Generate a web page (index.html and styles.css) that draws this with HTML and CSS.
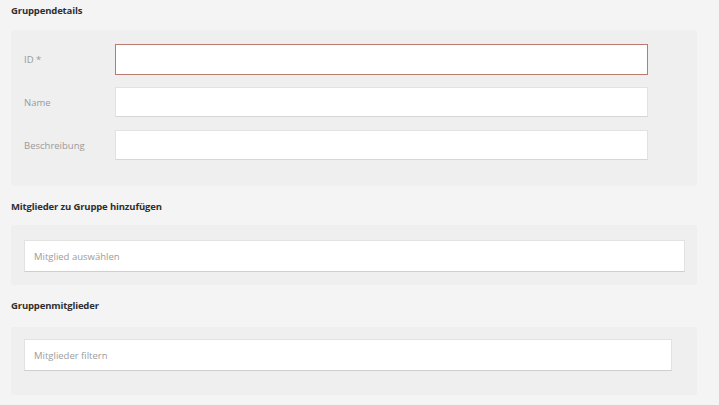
FILE: index.html
```html
<!DOCTYPE html>
<html lang="de">
<head>
<meta charset="utf-8">
<link rel="stylesheet" href="styles.css">
</head>
<body>
<div class="page">
  <h2 class="heading h-first">Gruppendetails</h2>
  <section class="panel panel-details">
    <div class="row">
      <label class="label">ID *</label>
      <div class="field field-error"></div>
    </div>
    <div class="row">
      <label class="label">Name</label>
      <div class="field"></div>
    </div>
    <div class="row">
      <label class="label">Beschreibung</label>
      <div class="field"></div>
    </div>
  </section>

  <h2 class="heading h-second">Mitglieder zu Gruppe hinzufügen</h2>
  <section class="panel panel-add">
    <div class="field wide"><span class="placeholder">Mitglied auswählen</span></div>
  </section>

  <h2 class="heading h-third">Gruppenmitglieder</h2>
  <section class="panel panel-members">
    <div class="field wide"><span class="placeholder">Mitglieder filtern</span></div>
  </section>
</div>
</body>
</html>
```

FILE: styles.css
```css
html, body {
  margin: 0;
  padding: 0;
  background: #f4f4f4;
  font-family: "Open Sans", "Noto Sans", sans-serif;
  color: #333;
}
.page {
  width: 686px;
  padding: 0 0 0 11px;
}
.heading {
  margin: 0;
  font-size: 9.5px;
  font-weight: 700;
  color: #2f2f2f;
  line-height: 14px;
  letter-spacing: -0.15px;
}
.h-first { padding-top: 4px; height: 30px; box-sizing: border-box; }
.h-second { padding-top: 14px; height: 39px; box-sizing: border-box; }
.h-third { padding-top: 14px; height: 42px; box-sizing: border-box; }

.panel {
  background: #efefef;
  border-radius: 2px;
  box-sizing: border-box;
}
.panel-details {
  height: 156px;
  padding: 14px 49px 0 13px;
  display: flex;
  flex-direction: column;
  gap: 13px;
}
.row {
  display: flex;
  align-items: center;
  height: 30px;
}
.label {
  width: 91px;
  font-size: 9.5px;
  color: #9a9a9a;
}
.field {
  flex: 1;
  height: 30px;
  background: #fff;
  border: 1px solid #e2e2e2;
  border-bottom-color: #d6d6d6;
  box-sizing: border-box;
  display: flex;
  align-items: center;
}
.field-error {
  border: 1px solid #b97a70;
  height: 31px;
}
.panel-add {
  height: 60px;
  padding: 15px 12px 0 13px;
}
.panel-members {
  height: 68px;
  padding: 12px 25px 0 13px;
}
.wide {
  height: 32px;
  padding-left: 9px;
  border-bottom: 1px solid #cfcfcf;
}
.placeholder {
  font-size: 9.5px;
  color: #9c9c9c;
}
```
